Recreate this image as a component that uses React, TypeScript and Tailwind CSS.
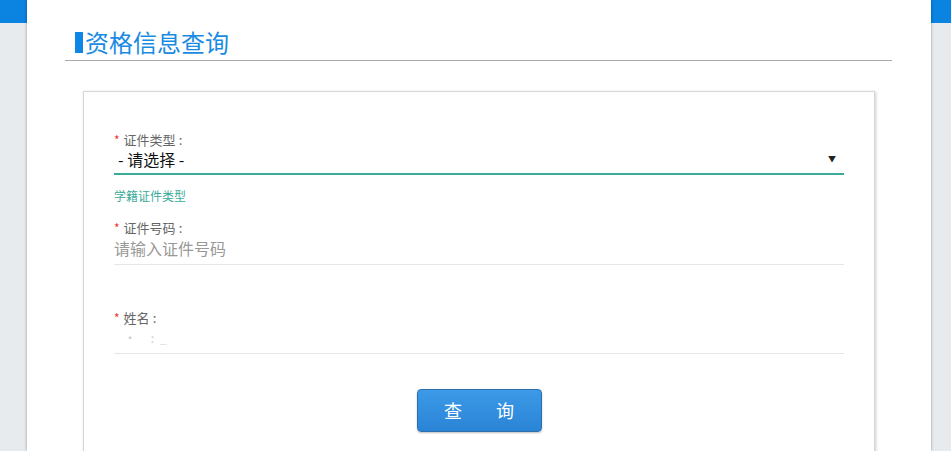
import React from "react";

const font = { fontFamily: '"Noto Sans CJK SC", "Noto Sans", sans-serif' };

function Label({ text }: { text: string }) {
  return (
    <div className="h-[18px] flex items-center text-[13px] leading-[18px] text-[#666]">
      <span className="text-[#e33] text-[12px] mr-[4px]">*</span>
      <span>{text}</span>
      <span className="ml-[3px]">:</span>
    </div>
  );
}

export default function App() {
  return (
    <div className="w-[951px] h-[451px] overflow-hidden flex bg-[#e7ebee]" style={font}>
      <div className="w-[27px] shrink-0 flex flex-col">
        <div className="h-[23px] bg-[#0a84e0]" />
      </div>
      <div className="w-[904px] shrink-0 bg-white shadow-[0_0_3px_rgba(0,0,0,0.35)] relative z-10 flex flex-col">
        <div className="ml-[38px] mr-[39px] pt-[27px] pb-[3px] border-b border-[#a9a9a9] flex items-center h-[61px]">
          <div className="ml-[10px] w-[8px] h-[21px] bg-[#0d86e6]" />
          <span className="ml-[2px] text-[24px] leading-[30px] text-[#1a8be2]">资格信息查询</span>
        </div>
        <div className="ml-[56px] mt-[30px] w-[792px] h-[420px] shrink-0 border border-[#d6d6d6] shadow-[1px_1px_3px_rgba(0,0,0,0.2)] pt-[39px] pl-[30px] pr-[30px]">
          <Label text="证件类型" />
          <div className="h-[20px] flex items-center justify-between pl-[4px] text-[16px] leading-[20px] text-[#111] box-content pb-[4px] border-b-2 border-[#3aab9a]">
            <span>- 请选择 -</span>
            <span className="text-[8px] text-[#222] mr-[8px]">▼</span>
          </div>
          <div className="mt-[12px] h-[18px] flex items-center text-[12px] leading-[18px] text-[#3aab9a]">学籍证件类型</div>
          <div className="mt-[14px]">
            <Label text="证件号码" />
          </div>
          <div className="h-[22px] flex items-center text-[16px] leading-[22px] text-[#999] box-content pb-[5px] border-b border-[#e6e6e6]">
            请输入证件号码
          </div>
          <div className="mt-[44px]">
            <Label text="姓名" />
          </div>
          <div className="h-[22px] flex items-center text-[12px] leading-[22px] text-[#ccc] box-content pb-[4px] border-b border-[#e6e6e6] pl-[10px]">
            <span className="tracking-[6px]">· :</span>
            <span className="text-[#ddd]">_</span>
          </div>
          <div className="mt-[35px] flex justify-center">
            <button className="w-[125px] h-[43px] rounded-[4px] border border-[#2c6fae] bg-gradient-to-b from-[#3c9ae8] to-[#2a84d6] text-white text-[18px] flex items-center justify-center gap-[34px] shadow-[0_1px_2px_rgba(0,0,0,0.25)]">
              <span>查</span>
              <span>询</span>
            </button>
          </div>
        </div>
      </div>
      <div className="w-[20px] shrink-0 flex flex-col">
        <div className="h-[23px] bg-[#0a84e0]" />
      </div>
    </div>
  );
}
